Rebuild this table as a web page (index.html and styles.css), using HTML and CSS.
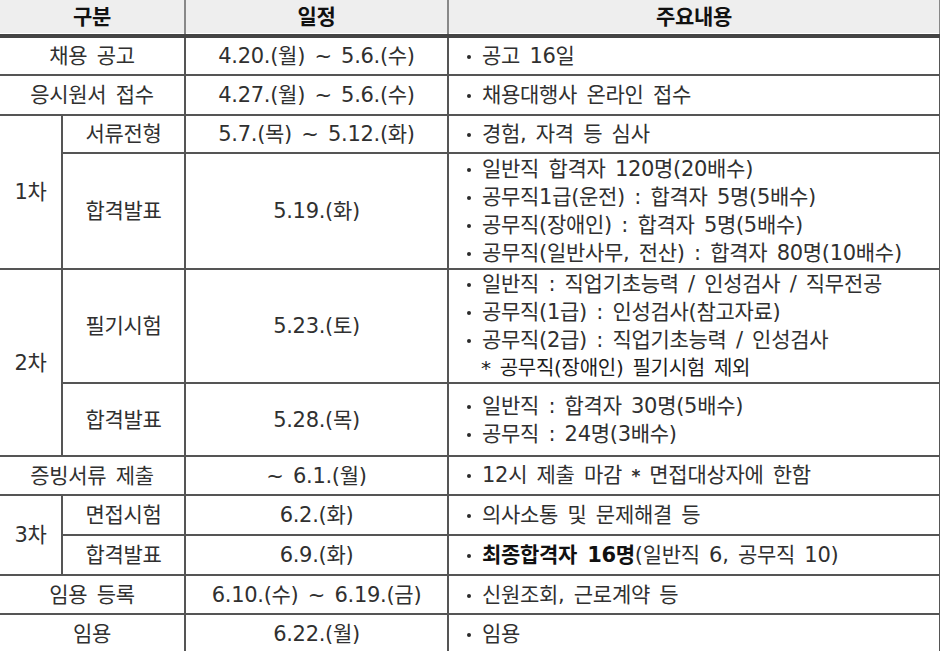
FILE: index.html
```html
<!DOCTYPE html>
<html lang="ko">
<head>
<meta charset="utf-8">
<title>채용 일정</title>
<link rel="stylesheet" href="styles.css">
</head>
<body>
<table class="schedule">
  <colgroup>
    <col class="c-stage">
    <col class="c-sub">
    <col class="c-date">
    <col class="c-desc">
  </colgroup>
  <thead>
    <tr class="r-head">
      <th colspan="2" class="first">구분</th>
      <th>일정</th>
      <th class="last">주요내용</th>
    </tr>
  </thead>
  <tbody>
    <tr class="r-1">
      <td colspan="2" class="first">채용 공고</td>
      <td>4.20.(월) ~ 5.6.(수)</td>
      <td class="desc"><div class="item">공고 16일</div></td>
    </tr>
    <tr class="r-2">
      <td colspan="2" class="first">응시원서 접수</td>
      <td>4.27.(월) ~ 5.6.(수)</td>
      <td class="desc"><div class="item">채용대행사 온라인 접수</div></td>
    </tr>
    <tr class="r-3">
      <td rowspan="2" class="first">1차</td>
      <td>서류전형</td>
      <td>5.7.(목) ~ 5.12.(화)</td>
      <td class="desc"><div class="item">경험, 자격 등 심사</div></td>
    </tr>
    <tr class="r-4">
      <td>합격발표</td>
      <td>5.19.(화)</td>
      <td class="desc">
        <div class="item">일반직 합격자 120명(20배수)</div>
        <div class="item">공무직1급(운전) : 합격자 5명(5배수)</div>
        <div class="item">공무직(장애인) : 합격자 5명(5배수)</div>
        <div class="item">공무직(일반사무, 전산) : 합격자 80명(10배수)</div>
      </td>
    </tr>
    <tr class="r-5">
      <td rowspan="2" class="first">2차</td>
      <td>필기시험</td>
      <td>5.23.(토)</td>
      <td class="desc">
        <div class="item">일반직 : 직업기초능력 / 인성검사 / 직무전공</div>
        <div class="item">공무직(1급) : 인성검사(참고자료)</div>
        <div class="item">공무직(2급) : 직업기초능력 / 인성검사</div>
        <div class="note">* 공무직(장애인) 필기시험 제외</div>
      </td>
    </tr>
    <tr class="r-6">
      <td>합격발표</td>
      <td>5.28.(목)</td>
      <td class="desc">
        <div class="item">일반직 : 합격자 30명(5배수)</div>
        <div class="item">공무직 : 24명(3배수)</div>
      </td>
    </tr>
    <tr class="r-7">
      <td colspan="2" class="first">증빙서류 제출</td>
      <td>~ 6.1.(월)</td>
      <td class="desc"><div class="item">12시 제출 마감 <span class="star">*</span> 면접대상자에 한함</div></td>
    </tr>
    <tr class="r-8">
      <td rowspan="2" class="first">3차</td>
      <td>면접시험</td>
      <td>6.2.(화)</td>
      <td class="desc"><div class="item">의사소통 및 문제해결 등</div></td>
    </tr>
    <tr class="r-9">
      <td>합격발표</td>
      <td>6.9.(화)</td>
      <td class="desc"><div class="item"><strong>최종합격자 16명</strong>(일반직 6, 공무직 10)</div></td>
    </tr>
    <tr class="r-10">
      <td colspan="2" class="first">임용 등록</td>
      <td>6.10.(수) ~ 6.19.(금)</td>
      <td class="desc"><div class="item">신원조회, 근로계약 등</div></td>
    </tr>
    <tr class="r-11">
      <td colspan="2" class="first">임용</td>
      <td>6.22.(월)</td>
      <td class="desc"><div class="item">임용</div></td>
    </tr>
  </tbody>
</table>
</body>
</html>
```

FILE: styles.css
```css
html, body {
  margin: 0;
  padding: 0;
  background: #ffffff;
}

body {
  font-family: "DejaVu Sans", "Noto Sans CJK KR", sans-serif;
  font-size: 21px;
  letter-spacing: -0.3px;
  word-spacing: 3px;
  color: #303030;
}

.schedule {
  border-collapse: collapse;
  table-layout: fixed;
  width: 940px;
}

.c-stage { width: 62px; }
.c-sub { width: 123px; }
.c-date { width: 263px; }
.c-desc { width: 492px; }

.schedule th,
.schedule td {
  border: 2px solid #555555;
  padding: 0;
  text-align: center;
  vertical-align: middle;
  line-height: 28px;
  font-weight: normal;
}

.schedule th {
  background: #eeeeee;
  color: #111111;
  font-weight: bold;
  word-spacing: 0;
  border-top: none;
  border-left-color: #888888;
  border-right-color: #888888;
  border-bottom: 4px solid #444444;
  box-shadow: inset 0 -1px 0 #ffffff;
}

.schedule .first {
  border-left: none;
}

.desc {
  text-align: left !important;
  padding-left: 16px !important;
}

.item::before {
  content: "";
  display: inline-block;
  width: 4px;
  height: 4px;
  margin: 0 11px 0 2px;
  border-radius: 50%;
  background: #2a2a2a;
  vertical-align: middle;
}

.item strong {
  font-weight: bold;
  color: #111111;
}

.note {
  padding-left: 16px;
  font-size: 20px;
  color: #1c1c1c;
}

.star {
  font-size: 17px;
  font-weight: bold;
}

.r-head { height: 36px; }
.r-1 { height: 39px; }
.r-2 { height: 40px; }
.r-3 { height: 38px; }
.r-4 { height: 116px; }
.r-5 { height: 111px; }
.r-6 { height: 73px; }
.r-7 { height: 39px; }
.r-8 { height: 40px; }
.r-9 { height: 40px; }
.r-10 { height: 39px; }
.r-11 { height: 39px; }
```
